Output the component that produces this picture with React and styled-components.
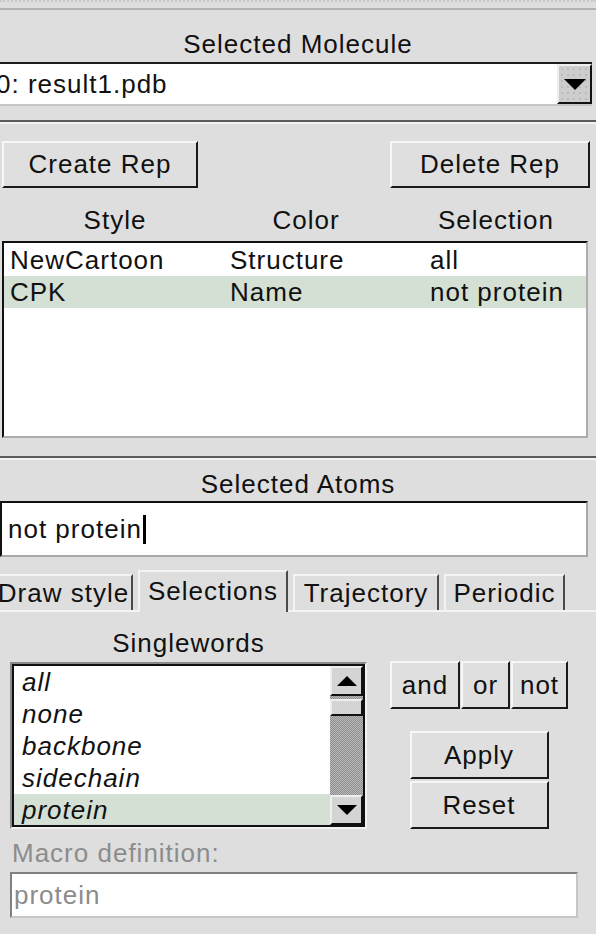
import styled, { createGlobalStyle } from "styled-components";

const reps = [
  { style: "NewCartoon", color: "Structure", selection: "all" },
  { style: "CPK", color: "Name", selection: "not protein", active: true },
];

const singlewords = ["all", "none", "backbone", "sidechain", "protein"];

const tabs = [
  { label: "Draw style", width: 139 },
  { label: "Selections", width: 150, active: true },
  { label: "Trajectory", width: 146 },
  { label: "Periodic", width: 121 },
];

const GlobalStyle = createGlobalStyle`
  html, body {
    margin: 0;
    padding: 0;
    background: #dedede;
  }
`;

const Window = styled.div`
  width: 596px;
  height: 934px;
  overflow: hidden;
  display: flex;
  flex-direction: column;
  background: #dedede;
  color: #111;
  font-family: "Liberation Sans", Arial, sans-serif;
  font-size: 26px;
  letter-spacing: 1px;
`;

const TopEdge = styled.div`
  flex: none;
  height: 8px;
  box-sizing: border-box;
  border-top: 2px dotted #c8c8c8;
`;

const Rule = styled.div`
  flex: none;
  height: 2px;
  background: #b2b2b2;
`;

const Groove = styled.div`
  flex: none;
  margin-top: ${(p) => p.$top}px;
  height: 0;
  border-top: 2px solid #5b5b5b;
  border-bottom: 2px solid #f3f3f3;
`;

const Caption = styled.div`
  flex: none;
  margin-top: ${(p) => p.$top || 0}px;
  height: 30px;
  line-height: 30px;
  text-align: center;
  white-space: nowrap;
`;

const Dropdown = styled.div`
  flex: none;
  margin: 3px 4px 0 0;
  height: 44px;
  box-sizing: border-box;
  display: flex;
  background: #fff;
  border-top: 2px solid #1d1d1d;
  border-bottom: 2px solid #c6c6c6;
`;

const DropdownValue = styled.div`
  flex: 1;
  margin-left: -4px;
  line-height: 40px;
  white-space: nowrap;
`;

const Stippled = styled.div`
  box-sizing: border-box;
  border-style: solid;
  border-width: 2px;
  border-color: #eeeeee #111 #111 #eeeeee;
  background-color: #cdcdcd;
  background-image: radial-gradient(circle, #b4b4b4 0.6px, transparent 1px);
  background-size: 6px 6px;
  display: flex;
  align-items: center;
  justify-content: center;
`;

const DropdownButton = styled(Stippled)`
  flex: none;
  width: 35px;
`;

const Triangle = styled.span`
  width: 0;
  height: 0;
  border-left: ${(p) => p.$size}px solid transparent;
  border-right: ${(p) => p.$size}px solid transparent;
  ${(p) => (p.$up ? "border-bottom" : "border-top")}: ${(p) => p.$size}px solid #000;
`;

const ButtonRow = styled.div`
  flex: none;
  margin-top: 17px;
  display: flex;
  justify-content: space-between;
  padding: 0 6px 0 2px;
`;

const RaisedButton = styled.div`
  flex: none;
  width: ${(p) => p.$w}px;
  height: ${(p) => p.$h}px;
  box-sizing: border-box;
  display: flex;
  align-items: center;
  justify-content: center;
  background: #dfdfdf;
  border-style: solid;
  border-width: 2px;
  border-color: #f7f7f7 #1a1a1a #1a1a1a #f7f7f7;
  white-space: nowrap;
`;

const RepHeader = styled.div`
  flex: none;
  margin-top: 17px;
  display: grid;
  grid-template-columns: 230px 152px 1fr;
  height: 30px;
  line-height: 30px;
  text-align: center;
`;

const HeaderCell = styled.div`
  padding-left: ${(p) => p.$pad || 0}px;
`;

const RepList = styled.div`
  flex: none;
  margin: 6px 0 0 2px;
  width: 586px;
  height: 197px;
  box-sizing: border-box;
  padding-top: 1px;
  background: #fff;
  border-style: solid;
  border-width: 2px;
  border-color: #111 #adadad #adadad #111;
`;

const RepRow = styled.div`
  display: grid;
  grid-template-columns: 220px 200px 1fr;
  padding-left: 6px;
  height: 32px;
  line-height: 32px;
  white-space: nowrap;
  background: ${(p) => (p.$active ? "#d3e0d3" : "transparent")};
`;

const AtomEntry = styled.div`
  flex: none;
  margin: 2px 8px 0 0;
  height: 56px;
  box-sizing: border-box;
  display: flex;
  align-items: center;
  padding-left: 6px;
  background: #fff;
  border-style: solid;
  border-width: 2px;
  border-color: #111 #a8a8a8 #a8a8a8 #111;
  white-space: nowrap;
`;

const Caret = styled.span`
  display: inline-block;
  width: 3px;
  height: 29px;
  margin-left: 1px;
  background: #000;
`;

const TabBar = styled.div`
  flex: none;
  margin: 9px 0 0 -6px;
  height: 46px;
  box-sizing: border-box;
  display: flex;
  align-items: flex-end;
  gap: 5px;
  border-bottom: 2px solid #f4f4f4;
`;

const Tab = styled.div`
  flex: none;
  position: relative;
  width: ${(p) => p.$w}px;
  height: ${(p) => (p.$active ? 42 : 36)}px;
  margin-bottom: ${(p) => (p.$active ? -2 : 0)}px;
  box-sizing: border-box;
  border-style: solid;
  border-width: 2px 2px 0 2px;
  border-color: #f4f4f4 #4a4a4a transparent #f4f4f4;
  background: #dedede;
  text-align: center;
  line-height: ${(p) => (p.$active ? 38 : 34)}px;
  white-space: nowrap;
`;

const SelectionPanel = styled.div`
  flex: none;
  margin-top: 16px;
  display: flex;
`;

const WordColumn = styled.div`
  flex: none;
  margin-left: 10px;
  width: 357px;
  display: flex;
  flex-direction: column;
`;

const WordFrame = styled.div`
  margin-top: 4px;
  height: 167px;
  box-sizing: border-box;
  border-style: solid;
  border-width: 2px;
  border-color: #8a8a8a #f2f2f2 #f2f2f2 #8a8a8a;
`;

const WordList = styled.div`
  height: 100%;
  box-sizing: border-box;
  display: flex;
  background: #fff;
  border: 2px solid #111;
`;

const WordItems = styled.div`
  flex: 1;
  overflow: hidden;
`;

const WordItem = styled.div`
  height: 32px;
  line-height: 32px;
  padding-left: 8px;
  font-style: italic;
  background: ${(p) => (p.$active ? "#d3e0d3" : "transparent")};
`;

const Scrollbar = styled.div`
  flex: none;
  width: 33px;
  display: flex;
  flex-direction: column;
  background: repeating-conic-gradient(#8e8e8e 0 25%, #b9b9b9 0 50%) 0 0 / 2px 2px;
`;

const ScrollArrow = styled(Stippled)`
  flex: none;
  height: ${(p) => p.$h}px;
  background-color: #d4d4d4;
  background-image: none;
`;

const ScrollThumb = styled(Stippled)`
  flex: none;
  height: 17px;
  margin-top: 3px;
  background-color: #d4d4d4;
  background-image: none;
`;

const Trough = styled.div`
  flex: 1;
`;

const ActionColumn = styled.div`
  flex: none;
  margin: 33px 0 0 23px;
  width: 178px;
  display: flex;
  flex-direction: column;
  align-items: center;
`;

const OperatorGroup = styled.div`
  display: flex;
  gap: 1px;
`;

const ApplyGroup = styled.div`
  margin-top: 22px;
  display: flex;
  flex-direction: column;
  gap: 2px;
`;

const MutedLabel = styled.div`
  flex: none;
  margin-top: 9px;
  padding-left: 12px;
  height: 30px;
  line-height: 30px;
  color: #8c8c8c;
`;

const MacroEntry = styled.div`
  flex: none;
  margin: 4px 0 0 10px;
  width: 568px;
  height: 46px;
  box-sizing: border-box;
  padding-left: 2px;
  line-height: 42px;
  background: #fff;
  color: #8c8c8c;
  border-style: solid;
  border-width: 2px;
  border-color: #808080 #c6c6c6 #c6c6c6 #808080;
`;

export default function App() {
  return (
    <>
      <GlobalStyle />
      <Window>
        <TopEdge />
        <Rule />

        <Caption $top={19}>Selected Molecule</Caption>
        <Dropdown>
          <DropdownValue>0: result1.pdb</DropdownValue>
          <DropdownButton>
            <Triangle $size={11} />
          </DropdownButton>
        </Dropdown>

        <Groove $top={14} />

        <ButtonRow>
          <RaisedButton $w={196} $h={47}>Create Rep</RaisedButton>
          <RaisedButton $w={200} $h={47}>Delete Rep</RaisedButton>
        </ButtonRow>

        <RepHeader>
          <HeaderCell>Style</HeaderCell>
          <HeaderCell>Color</HeaderCell>
          <HeaderCell $pad={14}>Selection</HeaderCell>
        </RepHeader>
        <RepList>
          {reps.map((r) => (
            <RepRow key={r.style} $active={r.active}>
              <span>{r.style}</span>
              <span>{r.color}</span>
              <span>{r.selection}</span>
            </RepRow>
          ))}
        </RepList>

        <Groove $top={18} />

        <Caption $top={9}>Selected Atoms</Caption>
        <AtomEntry>
          not protein
          <Caret />
        </AtomEntry>

        <TabBar>
          {tabs.map((t) => (
            <Tab key={t.label} $w={t.width} $active={t.active}>
              {t.label}
            </Tab>
          ))}
        </TabBar>

        <SelectionPanel>
          <WordColumn>
            <Caption>Singlewords</Caption>
            <WordFrame>
              <WordList>
                <WordItems>
                  {singlewords.map((w) => (
                    <WordItem key={w} $active={w === "protein"}>
                      {w}
                    </WordItem>
                  ))}
                </WordItems>
                <Scrollbar>
                  <ScrollArrow $h={30}>
                    <Triangle $up $size={10} />
                  </ScrollArrow>
                  <ScrollThumb />
                  <Trough />
                  <ScrollArrow $h={30}>
                    <Triangle $size={10} />
                  </ScrollArrow>
                </Scrollbar>
              </WordList>
            </WordFrame>
          </WordColumn>

          <ActionColumn>
            <OperatorGroup>
              <RaisedButton $w={70} $h={48}>and</RaisedButton>
              <RaisedButton $w={49} $h={48}>or</RaisedButton>
              <RaisedButton $w={57} $h={48}>not</RaisedButton>
            </OperatorGroup>
            <ApplyGroup>
              <RaisedButton $w={139} $h={48}>Apply</RaisedButton>
              <RaisedButton $w={139} $h={48}>Reset</RaisedButton>
            </ApplyGroup>
          </ActionColumn>
        </SelectionPanel>

        <MutedLabel>Macro definition:</MutedLabel>
        <MacroEntry>protein</MacroEntry>
      </Window>
    </>
  );
}
